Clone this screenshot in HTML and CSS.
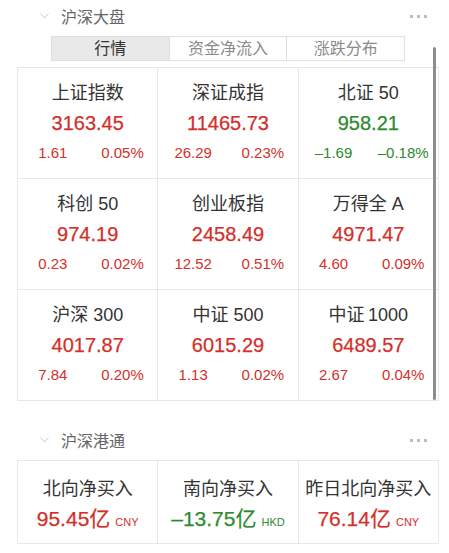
FILE: index.html
```html
<!DOCTYPE html>
<html lang="zh-CN">
<head>
    <meta charset="UTF-8">
    <meta name="viewport" content="width=device-width, initial-scale=1.0">
    <title>沪深大盘</title>
    <link rel="stylesheet" href="styles.css">
</head>
<body>
    <div class="page">
        <!-- 沪深大盘 -->
        <div class="section-header">
            <svg class="chevron" width="9" height="6" viewBox="0 0 9 6"><path d="M0.5 0.5 L4.5 5 L8.5 0.5" fill="none" stroke="#c8c8c8" stroke-width="1"/></svg>
            <span class="section-title">沪深大盘</span>
            <span class="more"><i></i><i></i><i></i></span>
        </div>

        <div class="tabs">
            <div class="tab active">行情</div>
            <div class="tab">资金净流入</div>
            <div class="tab">涨跌分布</div>
        </div>

        <div class="grid index-grid">
            <div class="cell">
                <div class="name">上证指数</div>
                <div class="value up">3163.45</div>
                <div class="change up"><span>1.61</span><span>0.05%</span></div>
            </div>
            <div class="cell">
                <div class="name">深证成指</div>
                <div class="value up">11465.73</div>
                <div class="change up"><span>26.29</span><span>0.23%</span></div>
            </div>
            <div class="cell">
                <div class="name">北证 50</div>
                <div class="value down">958.21</div>
                <div class="change down"><span>–1.69</span><span>–0.18%</span></div>
            </div>
            <div class="cell">
                <div class="name">科创 50</div>
                <div class="value up">974.19</div>
                <div class="change up"><span>0.23</span><span>0.02%</span></div>
            </div>
            <div class="cell">
                <div class="name">创业板指</div>
                <div class="value up">2458.49</div>
                <div class="change up"><span>12.52</span><span>0.51%</span></div>
            </div>
            <div class="cell">
                <div class="name">万得全 A</div>
                <div class="value up">4971.47</div>
                <div class="change up"><span>4.60</span><span>0.09%</span></div>
            </div>
            <div class="cell">
                <div class="name">沪深 300</div>
                <div class="value up">4017.87</div>
                <div class="change up"><span>7.84</span><span>0.20%</span></div>
            </div>
            <div class="cell">
                <div class="name">中证 500</div>
                <div class="value up">6015.29</div>
                <div class="change up"><span>1.13</span><span>0.02%</span></div>
            </div>
            <div class="cell">
                <div class="name">中证&thinsp;1000</div>
                <div class="value up">6489.57</div>
                <div class="change up"><span>2.67</span><span>0.04%</span></div>
            </div>
        </div>

        <!-- 沪深港通 -->
        <div class="section-header second">
            <svg class="chevron" width="9" height="6" viewBox="0 0 9 6"><path d="M0.5 0.5 L4.5 5 L8.5 0.5" fill="none" stroke="#c8c8c8" stroke-width="1"/></svg>
            <span class="section-title">沪深港通</span>
            <span class="more"><i></i><i></i><i></i></span>
        </div>

        <div class="grid flow-grid">
            <div class="cell">
                <div class="name">北向净买入</div>
                <div class="value up">95.45亿<small>CNY</small></div>
            </div>
            <div class="cell">
                <div class="name">南向净买入</div>
                <div class="value down">–13.75亿<small>HKD</small></div>
            </div>
            <div class="cell">
                <div class="name">昨日北向净买入</div>
                <div class="value up">76.14亿<small>CNY</small></div>
            </div>
        </div>

        <div class="scrollbar"></div>
    </div>
</body>
</html>
```

FILE: styles.css
```css
body {
    margin: 0;
    padding: 0;
    background-color: #fff;
    font-family: "Liberation Sans", "Noto Sans CJK SC", sans-serif;
    color: #333;
}

.page {
    position: relative;
    width: 449px;
    height: 553px;
    overflow: hidden;
}

.section-header {
    display: flex;
    align-items: center;
    height: 32px;
    padding: 0 22px 0 40px;
}

.section-header.second {
    margin-top: 23px;
}

.chevron {
    margin-top: -1px;
}

.section-title {
    margin-left: 12px;
    font-size: 16px;
    color: #666;
}

.more {
    margin-left: auto;
    display: flex;
    gap: 4px;
}

.more i {
    width: 3px;
    height: 3px;
    background-color: #bdbdbd;
}

.tabs {
    display: flex;
    margin: 4px 0 0 51px;
    width: 354px;
    height: 25px;
    border: 1px solid #e0e0e0;
    box-sizing: border-box;
}

.tab {
    flex: 1;
    text-align: center;
    font-size: 16px;
    line-height: 23px;
    color: #8a8a8a;
    border-left: 1px solid #e0e0e0;
}

.tab:first-child {
    border-left: none;
}

.tab.active {
    background-color: #e9e9e9;
    color: #333;
}

.grid {
    display: grid;
    grid-template-columns: repeat(3, 1fr);
    gap: 1px;
    margin-left: 17px;
    width: 422px;
    box-sizing: border-box;
    border: 1px solid #e8e8e8;
    background-color: #e8e8e8;
}

.index-grid {
    margin-top: 6px;
}

.flow-grid {
    margin-top: 4px;
}

.cell {
    background-color: #fff;
    text-align: center;
}

.index-grid .cell {
    padding: 13px 0 15px;
    height: 110px;
    box-sizing: border-box;
}

.flow-grid .cell {
    padding: 16px 0 10px;
    height: 82px;
    box-sizing: border-box;
}

.name {
    font-size: 18px;
    line-height: 24px;
    color: #333;
}

.value {
    margin-top: 4px;
    font-size: 20px;
    line-height: 28px;
    -webkit-text-stroke: 0.25px currentColor;
}

.flow-grid .value {
    margin-top: 3px;
    font-size: 21px;
    line-height: 30px;
}

.value small {
    margin-left: 5px;
    font-size: 11px;
    -webkit-text-stroke: 0;
}

.change {
    display: grid;
    grid-template-columns: 1fr 1fr;
    margin-top: 6px;
    font-size: 15px;
    line-height: 20px;
}

.up {
    color: #d3302b;
}

.down {
    color: #2d8a2f;
}

.scrollbar {
    position: absolute;
    left: 433px;
    top: 47px;
    width: 3px;
    height: 353px;
    border-radius: 2px;
    background-color: #8e8e8e;
}
```
